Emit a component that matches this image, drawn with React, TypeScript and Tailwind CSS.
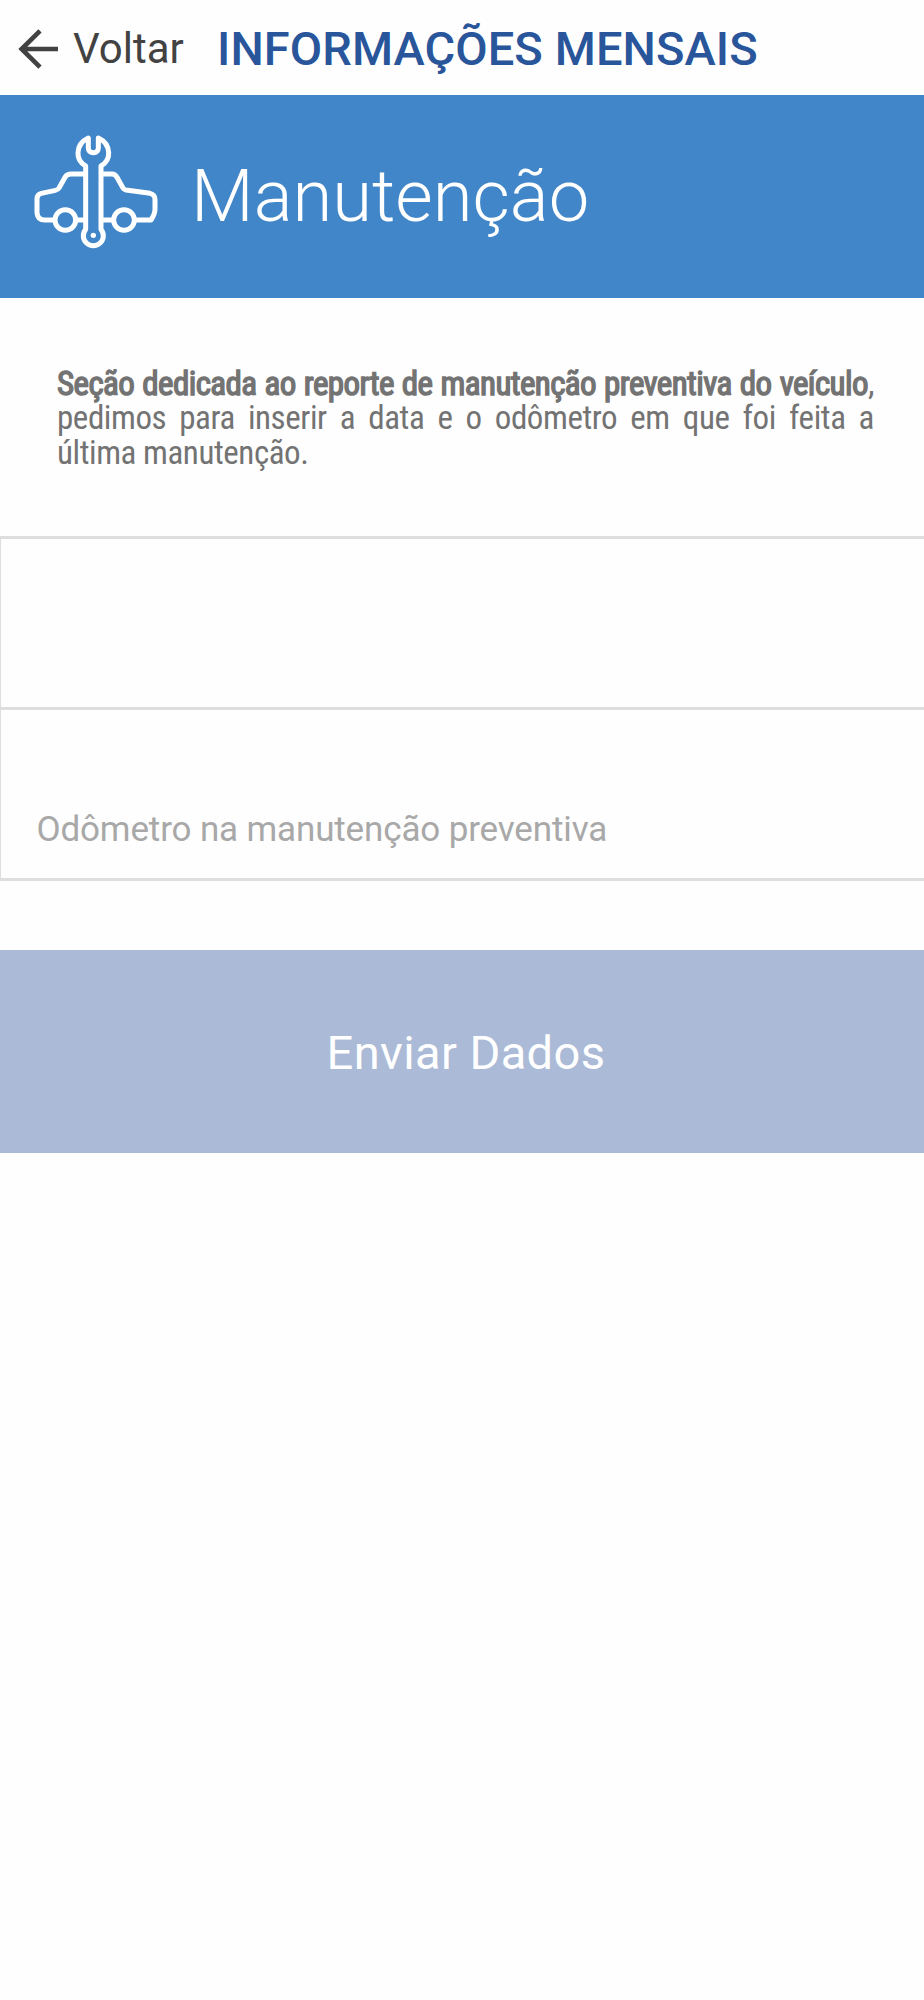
import { useState } from 'react';

function BackArrow() {
  return (
    <svg width="40" height="40" viewBox="0 0 40 40" fill="none" stroke="#424242" strokeWidth="4.6">
      <path d="M40 20H4M22 1.8L3.6 20L22 38.2" />
    </svg>
  );
}

function MaintenanceIcon() {
  return (
    <svg
      width="150"
      height="140"
      viewBox="0 0 450 420"
      fill="none"
      stroke="#fff"
      strokeWidth="15"
      strokeLinejoin="round"
    >
      {/* Car body */}
      <path d="M196 162H153Q142 162 136 170L117 204Q114 209 106 211L64 220Q51 223 51 236V278Q53 300 74 300H105" />
      <path d="M167 300H196M243 300H281M344 300H393Q405 282 405 268V238Q405 224 390 220L318 210Q312 209 309 204L291 172Q286 162 276 162H243" />
      <circle cx="136" cy="300" r="31" />
      <circle cx="312" cy="300" r="31" />
      {/* Wrench */}
      <path d="M197 328V138C180 128 173 114 174 98C175 75 190 61 205 54V85Q206 98 220 98Q234 98 235 85V54C250 61 265 75 266 98C267 114 260 128 243 138V328A30 30 0 1 1 197 328Z" />
      <circle cx="220" cy="346" r="8" fill="#fff" stroke="none" />
    </svg>
  );
}

export default function App() {
  const [odometer, setOdometer] = useState('');

  return (
    <div className="min-h-[2000px] w-full bg-[#fefefe] font-['Roboto',sans-serif]">
      <header className="flex h-[95px] items-center pt-[3px] pl-[18px] whitespace-nowrap">
        <button className="flex w-[199px] items-center text-[#424242]">
          <BackArrow />
          <span className="ml-[15px] text-[42px] leading-[50px]">Voltar</span>
        </button>
        <h1 className="text-[47px] leading-[56px] font-medium tracking-[0.09px] text-[#29559b]">
          INFORMAÇÕES MENSAIS
        </h1>
      </header>

      <section className="flex h-[203px] items-start bg-[#4186c8] pt-[25px] pl-[20px] text-white">
        <MaintenanceIcon />
        <h2 className="mt-[33px] ml-[21px] text-[72.4px] leading-[88px] font-light">Manutenção</h2>
      </section>

      <section className="h-[238px] pt-[69px] pr-[50px] pl-[57px]">
        <p className="text-justify font-['Roboto_Condensed','Roboto',sans-serif] text-[33px] leading-[34.3px] tracking-[-0.43px] text-[#737373] [font-stretch:75%]">
          <span className="tracking-[-0.6px] [-webkit-text-stroke:1.4px_#737373]">
            Seção dedicada ao reporte de manutenção preventiva do veículo
          </span>
          , pedimos para inserir a data e o odômetro em que foi feita a última manutenção.
        </p>
      </section>

      <form className="flex flex-col">
        <input
          type="text"
          aria-label="Data"
          className="h-[171px] w-full border-t-3 border-l border-[#dedede] px-[35px] outline-none"
        />
        <input
          type="text"
          value={odometer}
          onChange={(e) => setOdometer(e.target.value)}
          placeholder="Odômetro na manutenção preventiva"
          className="h-[174px] w-full border-y-3 border-l border-[#dedede] px-[35.5px] pt-[70px] text-[35px] tracking-[-0.14px] outline-none placeholder:text-[#a8a8a8]"
        />
        <button
          type="button"
          className="mt-[69px] h-[203px] w-full bg-[#abbad6] pt-[3px] pl-[8px] text-center text-[47px] tracking-[0.4px] text-white"
        >
          Enviar Dados
        </button>
      </form>
    </div>
  );
}
